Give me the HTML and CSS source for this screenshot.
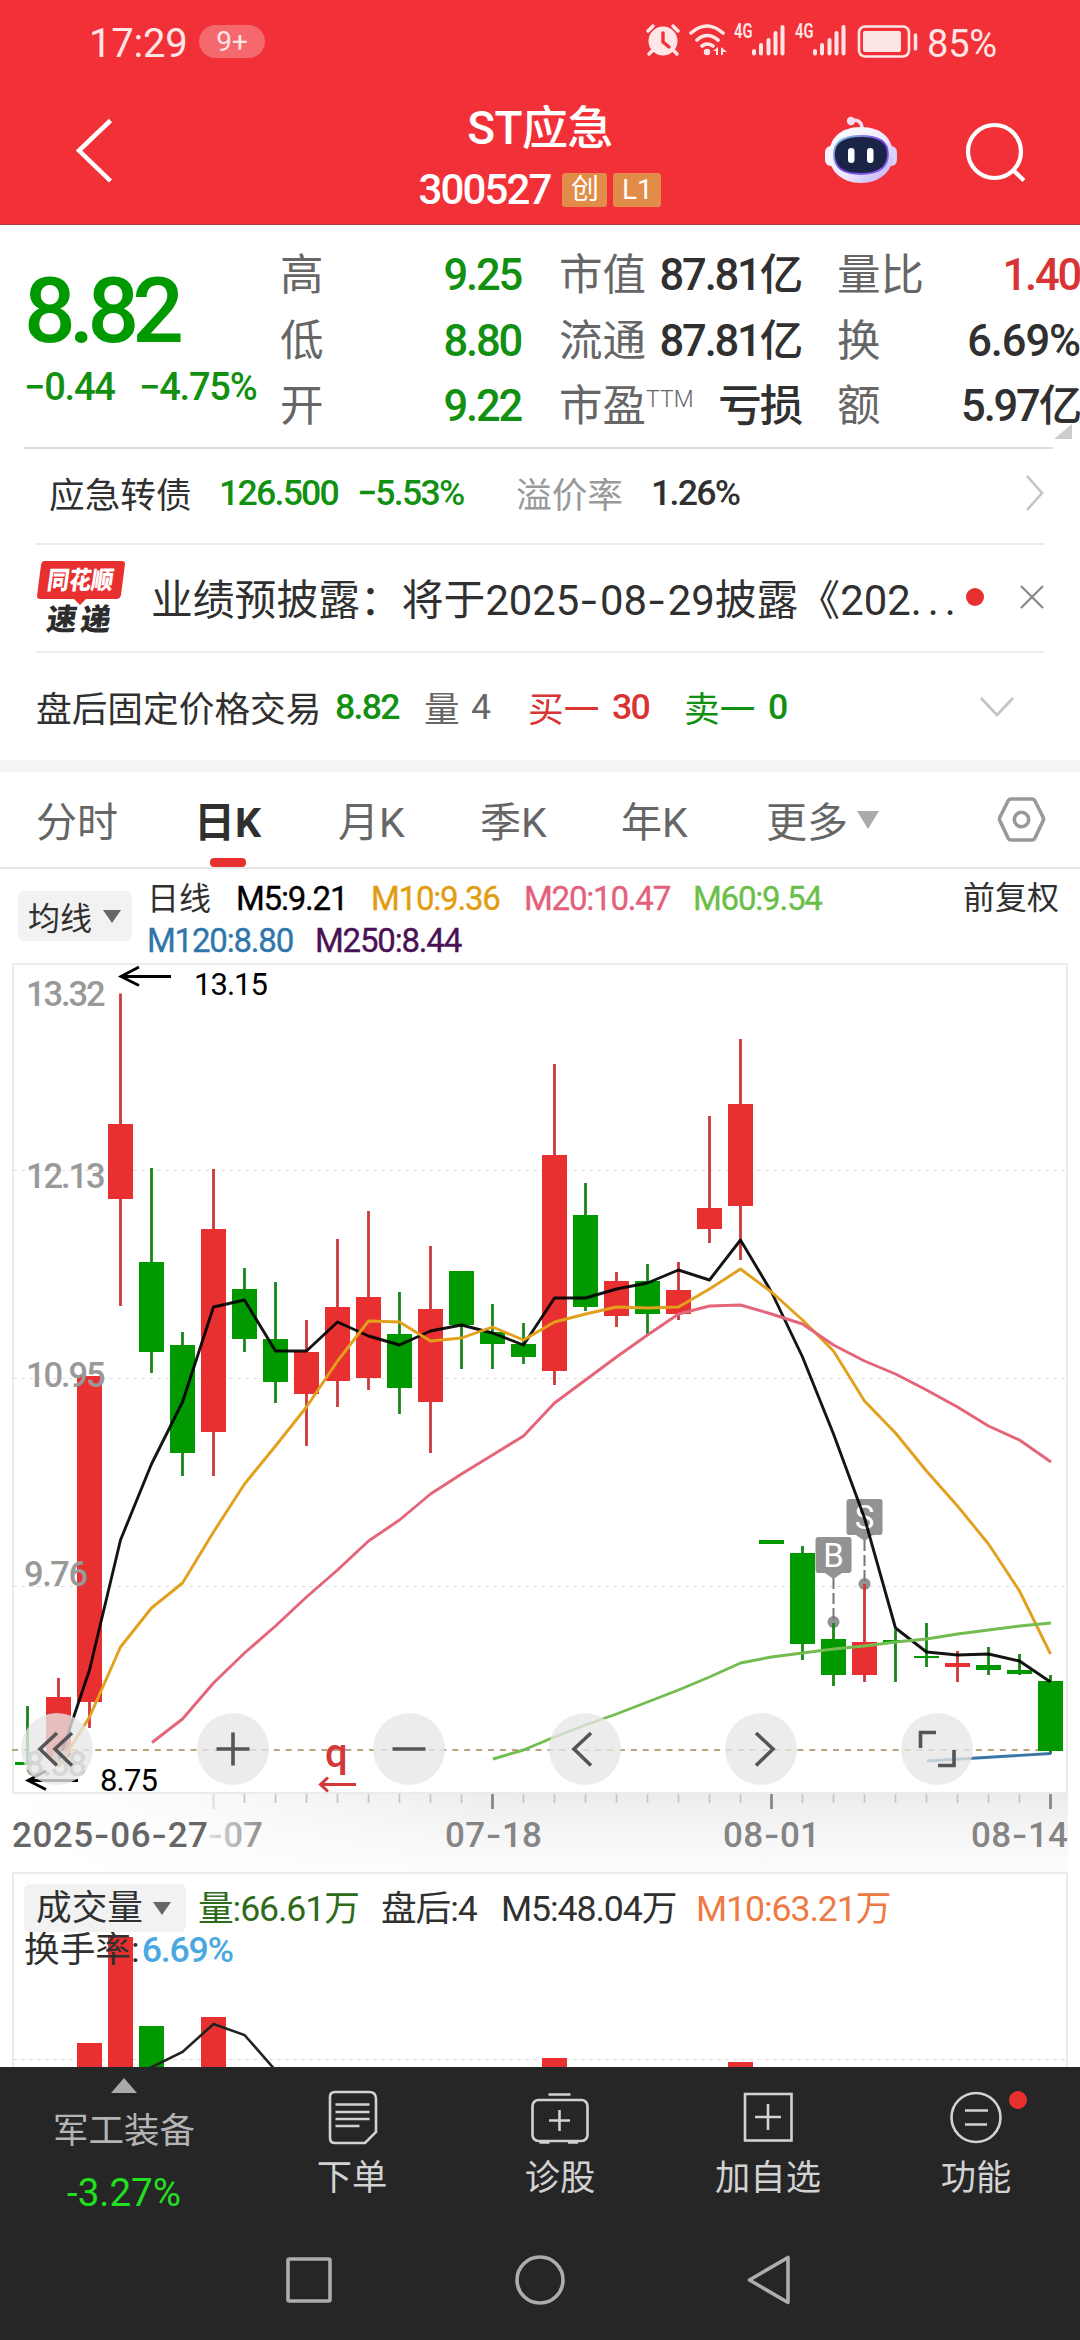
FILE: index.html
```html
<!DOCTYPE html>
<html lang="zh-CN">
<head>
<meta charset="utf-8">
<title>ST应急 300527</title>
<link rel="stylesheet" href="styles.css">
</head>
<body>
<header class="top">
  <div class="status">
    <div class="clock">17:29</div>
    <div class="badge">9+</div>
    <svg class="sys" viewBox="640 18 286 46" width="286" height="46" fill="#ffe6e6" stroke="#ffe6e6">
      <circle cx="663" cy="41" r="14.5" stroke="none"/>
      <path d="M648 31l5-5M678 31l-5-5M652 51l-3 3M674 51l3 3" stroke-width="3.5" stroke-linecap="round" fill="none"/>
      <path d="M663 33v9l6 5" stroke="#f23038" stroke-width="3.4" fill="none" stroke-linecap="round"/>
      <path d="M691 33Q707 19 723 33M697 40Q707 31 718 40M702 46Q707 42 713 46" fill="none" stroke-width="3.6" stroke-linecap="round"/>
      <circle cx="707" cy="52" r="3.2" stroke="none"/>
      <path d="M713 51l5-4v8h-2v-4zM721 47l6 5-4 0v3h-2z" stroke="none"/>
      <g stroke="none" font-size="20.500" font-weight="600">
        <text x="734" y="38" textLength="18.500" lengthAdjust="spacingAndGlyphs">4G</text>
        <text x="795" y="38" textLength="18.500" lengthAdjust="spacingAndGlyphs">4G</text>
      </g>
      <path d="M754 51v2.500M761 45v8.500M768.500 40v13.500M775.500 33v20.500M782.500 27v26.500M815 51v2.500M822 45v8.500M829.500 40v13.500M836.500 33v20.500M843.500 27v26.500" fill="none" stroke-width="4" stroke-linecap="round"/>
      <rect x="859" y="26.500" width="50" height="30" rx="6" fill="none" stroke-width="2.600"/>
      <rect x="863" y="31" width="38" height="21" rx="2" stroke="none"/>
      <path d="M915.500 35v14" stroke-width="3.500" stroke-linecap="round"/>
    </svg>
    <div class="battery">85%</div>
  </div>
  <div class="title-bar">
    <svg class="back" viewBox="70 112 50 76" width="50" height="76"><path d="M110.500 120.500L79 150.500L110.500 181" fill="none" stroke="#fff" stroke-width="4.500"/></svg>
    <div class="names">
      <div class="name">ST应急</div>
      <div class="code"><span>300527</span><b>创</b><b>L1</b></div>
    </div>
    <svg class="robot" viewBox="820 112 82 76" width="82" height="76">
      <defs>
        <linearGradient id="shell" x1="0" y1="0" x2="1" y2="1"><stop offset="0" stop-color="#fff"/><stop offset=".55" stop-color="#eeeafe"/><stop offset="1" stop-color="#b9a9f2"/></linearGradient>
        <linearGradient id="rim" x1="0" y1="0" x2="1" y2="1"><stop offset="0" stop-color="#7fd6e6"/><stop offset=".5" stop-color="#7a3fe0"/><stop offset="1" stop-color="#8a6af0"/></linearGradient>
      </defs>
      <path d="M850 121q12-3 12 8" fill="none" stroke="#f3dcec" stroke-width="3.500"/><circle cx="851" cy="121" r="4.200" fill="#f3dcec"/>
      <rect x="825" y="146" width="12" height="20" rx="6" fill="#f3f0ff"/><rect x="885" y="146" width="12" height="20" rx="6" fill="#d8cffa"/>
      <path d="M861 127c21 0 32 12 32 28s-13 28-32 28-32-12-32-28 11-28 32-28z" fill="url(#shell)"/>
      <path d="M861 136c20 0 27 7 27 18 0 13-8 20-27 20s-27-7-27-20c0-11 7-18 27-18z" fill="#1b2446" stroke="url(#rim)" stroke-width="1.800"/>
      <rect x="848" y="148" width="6.500" height="15" rx="3.200" fill="#fff"/><rect x="867" y="148" width="6.500" height="15" rx="3.200" fill="#fff"/>
    </svg>
    <svg class="search" viewBox="960 112 70 76" width="70" height="76"><g fill="none" stroke="#fff" stroke-width="4.200"><circle cx="994.500" cy="151.500" r="26.500"/><path d="M1013.500 170.500L1024 180.500"/></g></svg>
  </div>
</header>

<section class="quote">
  <div class="price">
    <div class="last">8.82</div>
    <div class="change"><span>−0.44</span><span>−4.75%</span></div>
  </div>
  <dl class="facts f1"><dt>高</dt><dd class="g">9.25</dd><dt>低</dt><dd class="g">8.80</dd><dt>开</dt><dd class="g">9.22</dd></dl>
  <dl class="facts f2"><dt>市值</dt><dd>87.81亿</dd><dt>流通</dt><dd>87.81亿</dd><dt>市盈<sup>TTM</sup></dt><dd>亏损</dd></dl>
  <dl class="facts f3"><dt>量比</dt><dd class="r">1.40</dd><dt>换</dt><dd class="pct">6.69%</dd><dt>额</dt><dd>5.97亿</dd></dl>
  <i class="corner"></i>
</section>

<section class="row bond">
  <span>应急转债</span><span class="g n">126.500</span><span class="g n">−5.53%</span><span class="mute">溢价率</span><span class="n">1.26%</span>
  <svg viewBox="0 0 24 40" width="24" height="40"><path d="M4 3l15 17L4 37" fill="none" stroke="#c4c4c4" stroke-width="2.600"/></svg>
</section>

<section class="row news">
  <svg viewBox="34 558 96 78" width="96" height="78">
    <path d="M44 561h78q3 0 3 3l-4 31q-1 4-4 4h-31l-6 6-6-6h-34q-3 0-3-3l4-31q1-4 3-4z" fill="#e83030"/>
    <g transform="skewX(-8)" font-weight="900">
      <text x="129" y="589.500" font-size="25" fill="#fff" textLength="66" lengthAdjust="spacingAndGlyphs">同花顺</text>
      <text x="134" y="630" font-size="30" fill="#2c2c2c" textLength="64">速递</text>
    </g>
  </svg>
  <span class="headline">业绩预披露：将于2025<i>-</i>08<i>-</i>29披露《202<em>...</em></span>
  <b class="dot"></b>
  <svg viewBox="0 0 24 24" width="24" height="24"><path d="M1 1l22 22M23 1L1 23" stroke="#888" stroke-width="2.200"/></svg>
</section>

<section class="row after">
  <span>盘后固定价格交易</span><span class="g n">8.82</span><span class="dim">量</span><span class="dim n">4</span><span class="r">买一</span><span class="r n">30</span><span class="g">卖一</span><span class="g n">0</span>
  <svg viewBox="0 0 36 22" width="36" height="22"><path d="M2 2l16 17L34 2" fill="none" stroke="#c4c4c4" stroke-width="2.600"/></svg>
</section>

<nav class="tabs">
  <span>分时</span><span class="on">日K</span><span>月K</span><span>季K</span><span>年K</span><span>更多</span><i class="caret"></i>
  <svg viewBox="994 793 54 54" width="54" height="54" fill="none" stroke="#999" stroke-width="3.600"><path d="M1010 799h21q2 0 3 2l8 16q1 2 0 4l-8 17q-1 2-3 2h-21q-2 0-3-2l-8-17q-1-2 0-4l8-16q1-2 3-2z"/><circle cx="1020.500" cy="819.500" r="7.200"/></svg>
</nav>

<section class="averages">
  <div class="pick">均线<i></i></div>
  <div class="lines">
    <div class="l1"><span>日线</span><span class="m5">M5:9.21</span><span class="m10">M10:9.36</span><span class="m20">M20:10.47</span><span class="m60">M60:9.54</span></div>
    <div class="l2"><span class="m120">M120:8.80</span><span class="m250">M250:8.44</span></div>
  </div>
  <div class="adjust">前复权</div>
</section>

<svg class="kline" viewBox="0 962 1080 910" width="1080" height="910">
  <defs>
    <linearGradient id="axis" x1="0" y1="0" x2="0" y2="1"><stop offset="0" stop-color="#ececec"/><stop offset=".5" stop-color="#f6f6f6"/><stop offset="1" stop-color="#fcfcfc"/></linearGradient>
    <linearGradient id="fade" x1="0" y1="0" x2="1" y2="0"><stop offset="0" stop-color="#fff"/><stop offset=".3" stop-color="#fff" stop-opacity=".8"/><stop offset="1" stop-color="#fff" stop-opacity="0"/></linearGradient>
    <linearGradient id="dim" x1="0" y1="0" x2="1" y2="0"><stop offset="0" stop-color="#e4e4e4"/><stop offset="1" stop-color="#8c8c8c"/></linearGradient>
  </defs>
  <rect x="12" y="1794" width="1056" height="78" fill="url(#axis)"/>
  <rect x="11" y="1794" width="500" height="78" fill="url(#fade)"/>
  <rect x="13" y="964" width="1054" height="829" fill="#fff" stroke="#ebebeb" stroke-width="2"/>
  <path d="M13 1170.500H1066M13 1378.500H1066M13 1586.500H1066" stroke="#dfdfdf" stroke-width="1.200" stroke-dasharray="4 4"/>
  <path d="M12 1750H1038" stroke="#b8a47c" stroke-width="2" stroke-dasharray="6 5.900"/>

  <g fill="#929292">
    <circle cx="833.500" cy="1622" r="6"/><circle cx="864.500" cy="1584" r="6"/>
    <path d="M833.500 1578v44M864.500 1540v44" stroke="#777" stroke-width="2" stroke-dasharray="11 4"/>
    <rect x="815.500" y="1537" width="36" height="36" rx="3"/><path d="M825 1573h17l-8.500 6z"/>
    <rect x="846.500" y="1499" width="36" height="36" rx="3"/><path d="M856 1535h17l-8.500 6z"/>
  </g>
  <g fill="#fff" font-size="33" text-anchor="middle"><text x="833.500" y="1567">B</text><text x="864.500" y="1529">S</text></g>

  <path stroke="#1a861a" stroke-width="2.800" fill="none" d="M27.500 1706V1763M151.500 1168V1373M182.500 1332V1476M244.500 1268V1352M275.500 1282V1403M399.500 1292V1414M461.500 1271V1369M492.500 1304V1369M523.500 1323V1364M585.500 1183V1311M647.500 1264V1334M802.500 1546V1660M833.500 1623V1686M895.500 1630V1682M926.500 1623V1667M988.500 1647V1675M1019.500 1654V1675M1050.500 1675V1754"/>
  <path stroke="#cc3a3a" stroke-width="2.800" fill="none" d="M58.500 1678V1757M89.500 1376V1728M120.500 993.500V1306M213.500 1169V1476M306.500 1320V1446M337.500 1239V1407M368.500 1211V1390M430.500 1246V1453M554.500 1064V1385M616.500 1272V1327M678.500 1262V1320M709.500 1116V1243M740.500 1039V1260M864.500 1584V1682M957.500 1651V1682"/>
  <path fill="#090" d="M15 1762h25v3h-25zM139 1262h25v90h-25zM170 1345h25v108h-25zM232 1289h25v50h-25zM263 1339h25v43h-25zM387 1334h25v54h-25zM449 1271h25v54h-25zM480 1332h25v12h-25zM511 1344h25v13h-25zM573 1215h25v92h-25zM635 1281h25v33h-25zM759 1540h25v4h-25zM790 1553h25v91h-25zM821 1639h25v36h-25zM883 1640h25v2h-25zM914 1656h25v2h-25zM976 1665h25v5h-25zM1007 1670h25v4h-25zM1038 1681h25v70h-25z"/>
  <path fill="#e83030" d="M46 1697h25v60.500h-25zM77 1376h25v326h-25zM108 1124h25v75h-25zM201 1229h25v203h-25zM294 1352h25v42h-25zM325 1307h25v74h-25zM356 1297h25v81h-25zM418 1309h25v93h-25zM542 1155h25v216h-25zM604 1281h25v35h-25zM666 1290h25v24h-25zM697 1208h25v21h-25zM728 1104h25v102h-25zM852 1642h25v33h-25zM945 1663h25v4h-25z"/>

  <g fill="none" stroke-width="2.900" stroke-linejoin="round">
    <path stroke="#000" stroke-opacity=".92" d="M58.500 1762L89.500 1670L120.500 1540L151.500 1464L182.500 1402L213.500 1307L244.500 1300L275.500 1351H306.500L337.500 1322L368.500 1336L399.500 1345L430.500 1331L461.500 1325L492.500 1333L523.500 1345L554.500 1298H585.500L616.500 1289L647.500 1283L678.500 1270L709.500 1280L740.500 1240L771.500 1292L802.500 1357L833.500 1434L864.500 1518L895.500 1628L926.500 1652L957.500 1655L988.500 1654L1019.500 1661L1050.500 1682"/>
    <path stroke="#e2a01c" d="M58.500 1767L89.500 1717L120.500 1647L151.500 1608L182.500 1583L213.500 1532L244.500 1484L275.500 1446L306.500 1407L337.500 1361L368.500 1321L399.500 1322L430.500 1341L461.500 1338L492.500 1327L523.500 1340L554.500 1322L585.500 1314L616.500 1307L647.500 1308L678.500 1307L709.500 1289L740.500 1269L771.500 1292L802.500 1320L833.500 1351L864.500 1401L895.500 1433L926.500 1471L957.500 1506L988.500 1544L1019.500 1591L1050.500 1654"/>
    <path stroke="#e4647a" d="M152 1742.500L182.500 1719L213.500 1683L244.500 1653L275.500 1626L306.500 1597L337.500 1570L368.500 1541L399.500 1520L430.500 1494L461.500 1474L492.500 1455L523.500 1436L554.500 1403L585.500 1380L616.500 1357L647.500 1335L678.500 1314L709.500 1306L740.500 1305L771.500 1314L802.500 1324L833.500 1345L864.500 1361L895.500 1374L926.500 1390L957.500 1407L988.500 1426L1019.500 1440L1051 1462"/>
    <path stroke="#72bc50" d="M493 1759L523.500 1750L554.500 1737L585.500 1725L616.500 1714L647.500 1702L678.500 1690L709.500 1677L740.500 1663L771.500 1657L802.500 1653L833.500 1649L864.500 1646L895.500 1642L926.500 1639L957.500 1634L988.500 1630L1019.500 1626L1051 1623"/>
    <path stroke="#3a76a6" d="M927 1761L1051 1753.500"/>
  </g>

  <g fill="#999" font-size="34.500" font-weight="500">
    <text x="26" y="1006" textLength="79.500">13.32</text><text x="26" y="1187.500" textLength="79.500">12.13</text><text x="26" y="1387" textLength="79.500">10.95</text><text x="24" y="1586" textLength="64">9.76</text><text x="25" y="1776" textLength="62">8.58</text>
  </g>
  <g fill="none" stroke="#000" stroke-width="2.800"><path d="M171 976.500H121M139 967L121 976.500L139 985.500M78 1780.500H28M46 1771L28 1780.500L46 1789.500"/></g>
  <g font-size="31"><text x="194" y="995" textLength="74">13.15</text><text x="100" y="1791" textLength="58">8.75</text></g>
  <text x="325" y="1766.500" font-size="40" font-weight="500" fill="#d23838">q</text>
  <path d="M356 1784.500H321M328 1777.500L320.500 1784.500L328 1791.500" fill="none" stroke="#d23838" stroke-width="3"/>

  <g fill="#e7e7e7" fill-opacity=".78"><circle cx="57" cy="1749" r="36"/><circle cx="233" cy="1749" r="36"/><circle cx="409" cy="1749" r="36"/><circle cx="585" cy="1749" r="36"/><circle cx="761" cy="1749" r="36"/><circle cx="937" cy="1749" r="36"/></g>
  <g fill="none" stroke="#555" stroke-width="3.600"><path d="M57 1733L40 1749L57 1765.500M72 1733L55 1749L72 1765.500M216.500 1749h33M233 1732.500v33M392.500 1749h33M591 1733L574 1749L591 1765.500M756 1733L773 1749L756 1765.500M920.500 1748V1732.500H936M938 1765.500H954V1750"/></g>

  <g fill="none"><path stroke="#c4c4c4" stroke-width="1.600" d="M244.500 1794v9M275.500 1794v9M306.500 1794v9M337.500 1794v9M368.500 1794v9M399.500 1794v9M430.500 1794v9M461.500 1794v9M523.500 1794v9M554.500 1794v9M585.500 1794v9M616.500 1794v9M647.500 1794v9M678.500 1794v9M709.500 1794v9M740.500 1794v9M802.500 1794v9M833.500 1794v9M864.500 1794v9M895.500 1794v9M926.500 1794v9M957.500 1794v9M988.500 1794v9M1019.500 1794v9"/>
  <path stroke="#888" stroke-width="2.800" d="M492.500 1794v15M771.500 1794v15M1050.500 1794v15"/><path stroke="#e4e4e4" stroke-width="2.800" d="M213.500 1794v15"/></g>
  <g font-size="35" font-weight="500" fill="#858585">
    <text x="12" y="1847" fill="#666" textLength="196">2025<tspan class="hy">-</tspan>06<tspan class="hy">-</tspan>27</text>
    <text x="207" y="1847" fill="url(#dim)" textLength="56"><tspan class="hy">-</tspan>07</text>
    <text x="445" y="1847" textLength="97">07<tspan class="hy">-</tspan>18</text>
    <text x="723" y="1847" textLength="97">08<tspan class="hy">-</tspan>01</text>
    <text x="971" y="1847" textLength="97">08<tspan class="hy">-</tspan>14</text>
  </g>
</svg>

<section class="volume">
  <svg viewBox="0 1872 1080 195" width="1080" height="195">
    <path d="M13 2067V1873H1067V2067" fill="#fff" stroke="#ebebeb" stroke-width="2"/>
    <path d="M13 2059.500H1066" stroke="#dcdcdc" stroke-width="1.200" stroke-dasharray="4 4"/>
    <path fill="#e83030" d="M77 2043h25v24h-25zM108 1937h25v130h-25zM201 2017h25v50h-25zM542 2058h25v9h-25zM728 2062h25v5h-25z"/>
    <path fill="#090" d="M139 2026h25v41h-25z"/>
    <path d="M150 2068L182.500 2052L213.500 2024L244.500 2035L273.500 2068" fill="none" stroke="#222" stroke-width="2.600"/>
  </svg>
  <div class="legend">
    <div class="v1"><div class="pick">成交量<i></i></div><span class="va">量:66.61万</span><span>盘后:4</span><span>M5:48.04万</span><span class="vm">M10:63.21万</span></div>
    <div class="v2">换手率:<span>6.69%</span></div>
  </div>
</section>

<footer class="bottom">
  <nav class="actions">
    <div class="sector"><i></i><span>军工装备</span><b>-3.27%</b></div>
    <div class="act"><svg viewBox="322 2086 60 62" width="60" height="62"><path d="M335 2092h34q7 0 7 7v33l-11 11h-30q-5 0-5-5v-41q0-5 5-5z"/><path d="M335.500 2104.500h34M335.500 2112h34M335.500 2119h34M335.500 2126h24"/></svg><span>下单</span></div>
    <div class="act"><svg viewBox="530 2086 60 62" width="60" height="62"><rect x="532.500" y="2100" width="55" height="41" rx="6"/><path d="M548.500 2094.500h22M559.500 2110v21M549 2120.500h21M539.500 2142.500h10M568 2142.500h10"/></svg><span>诊股</span></div>
    <div class="act"><svg viewBox="737 2086 60 62" width="60" height="62"><rect x="744" y="2094" width="46.500" height="46.500"/><path d="M767 2104v26M754 2117h26"/></svg><span>加自选</span></div>
    <div class="act"><svg viewBox="945 2086 60 62" width="60" height="62"><circle cx="975" cy="2117.500" r="24.500"/><path d="M964 2110.500h23M964 2124.500h22"/></svg><span>功能</span><b class="dot"></b></div>
  </nav>
  <svg class="keys" viewBox="0 2220 1080 120" width="1080" height="120" fill="none" stroke="#adadad" stroke-width="3.600" stroke-linejoin="round"><rect x="288" y="2259" width="42" height="42" rx="1.500"/><circle cx="540" cy="2280" r="23"/><path d="M749.500 2280L788 2257.500V2302.500z"/></svg>
</footer>
</body>
</html>
```
FILE: styles.css
```css
* { box-sizing: border-box; }
body {
  margin: 0;
  width: 1080px;
  height: 2340px;
  overflow: hidden;
  background: #fff;
  color: #303030;
  font-family: Roboto, "Noto Sans CJK SC", sans-serif;
  white-space: nowrap;
}
svg { display: block; flex: none; }
i, em { font-style: normal; }
.g { color: #119011; }
.r { color: #d83434; }
.n { font-weight: 500; letter-spacing: -0.05em; }

.top { height: 225px; background: #f23038; color: #fff; border-bottom: 1px solid #b03b48; }
.status { display: flex; height: 86px; padding-left: 89px; color: #ffe6e6; }
.clock { width: 110px; font-size: 40px; line-height: 87px; letter-spacing: -0.2px; }
.badge { width: 66px; height: 33px; margin-top: 25px; border-radius: 17px; background: #f5686e; font-size: 28px; line-height: 34px; text-align: center; }
.sys { margin: 18px 0 0 375px; }
.battery { margin-left: 1px; font-size: 38px; line-height: 88px; letter-spacing: -0.2px; }

.title-bar { display: flex; height: 138px; padding-left: 70px; }
.back { margin-top: 26px; }
.names { width: 600px; margin-left: 120px; text-align: center; }
.name { height: 84px; font-size: 46px; font-weight: 500; line-height: 84px; letter-spacing: -0.6px; }
.code { display: flex; justify-content: center; align-items: center; height: 40px; font-size: 42px; font-weight: 500; line-height: 40px; letter-spacing: -1.9px; }
.code span { margin-right: 12px; }
.code b { width: 45px; height: 34px; margin-right: 6px; border-radius: 3px; background: #e28c4a; font-size: 28px; font-weight: 400; line-height: 34px; letter-spacing: 0; }
.code b:last-child { width: 48px; margin-right: 0; }
.robot { margin: 26px 0 0 -20px; }
.search { margin: 26px 0 0 58px; }

.quote { position: relative; display: flex; height: 222px; }
.price { width: 280px; padding: 39px 0 0 24px; color: #090; font-weight: 500; }
.last { height: 94px; font-size: 91px; line-height: 94px; letter-spacing: -6.8px; }
.change { display: grid; grid-template-columns: 115px auto; margin-top: 11px; color: #119011; font-size: 38px; line-height: 36px; letter-spacing: -1.2px; }
.facts { display: grid; grid-template-columns: 80px 1fr; grid-auto-rows: 65.5px; align-items: center; margin: 18px 0 0; height: 197px; font-size: 43.5px; line-height: 65px; }
.facts dt { color: #666; }
.facts dd { margin: 0; font-weight: 500; letter-spacing: -0.05em; text-align: right; }
.facts .pct { letter-spacing: -0.025em; }
.facts sup { position: relative; top: -14px; font-size: 23px; line-height: 0; vertical-align: baseline; font-weight: 300; }
.f1 { width: 241px; }
.f2 { width: 242px; margin-left: 38px; }
.f3 { width: 243px; margin-left: 36px; }
.corner { position: absolute; right: 8px; bottom: 8px; border: solid transparent; border-width: 15px 0 0 18px; border-bottom: 15px solid #ccc; border-top: 0; }

.row { position: relative; display: grid; align-items: center; font-size: 35.7px; }
.row::before { content: ""; position: absolute; top: 0; left: 36px; right: 36px; height: 2px; background: #ececec; }
.bond { height: 96px; padding: 0 0 5px 49px; grid-template-columns: 170px 138px 159px 135px 372px 24px; }
.bond::before { left: 24px; right: 27px; background: #dedede; }
.mute { color: #999; }
.dim { color: #666; }
.news { height: 108px; padding-left: 34px; grid-template-columns: 117px 815px 54px 24px; }
.headline { font-size: 41.8px; }
.headline i, .hy { font-family: Inter, sans-serif; }
.headline i { letter-spacing: 1.5px; }
.headline em { letter-spacing: 6px; }
.dot { width: 18px; height: 18px; border-radius: 50%; background: #e83030; }
.after { height: 109px; padding: 2px 0 0 36px; grid-template-columns: 299px 89px 47px 57px 84px 72px 84px 211px 36px; }
.after .dim.n { font-weight: 400; }

.tabs { position: relative; display: grid; align-items: center; height: 109px; padding: 0 0 0 36px; border-top: 12px solid #f4f4f4; border-bottom: 2px solid #e6e6e6; grid-template-columns: 160px 142px 142px 141px 145px 91px 138px 54px; color: #666; font-size: 41px; }
.on { position: relative; left: -2px; color: #303030; font-weight: 700; }
.tabs span { padding-bottom: 2px; }
.on::after { content: ""; position: absolute; left: 16px; bottom: -16px; width: 36px; height: 9px; border-radius: 4px; background: #e83030; }
.caret { width: 0; border: solid transparent; border-width: 18px 11px 0; border-top-color: #aaa; }

.averages { display: flex; height: 93px; padding-left: 18px; font-size: 32px; }
.pick { display: flex; flex: none; align-items: center; background: #f2f2f2; border-radius: 6px; }
.pick i { border: solid transparent; border-width: 13px 9px 0; border-top-color: #666; }
.averages .pick { width: 114px; height: 50px; margin-top: 22px; padding-left: 10px; gap: 11px; }
.lines { flex: none; width: 832px; padding-left: 15px; line-height: 42px; }
.l1, .l2 { display: grid; height: 42px; }
.l1 { margin-top: 9px; grid-template-columns: 89px 135px 153px 169px auto; }
.l2 { grid-template-columns: 168px auto; }
.lines [class^="m"] { font-size: 33px; font-weight: 400; letter-spacing: -1.2px; -webkit-text-stroke: .35px currentColor; }
.adjust { margin: 8px 0 0 -1px; line-height: 42px; }
.m5 { color: #000; } .m10 { color: #e29c0f; } .m20 { color: #e4607a; }
.m60 { color: #6bbf48; } .m120 { color: #2f76aa; } .m250 { color: #4a1254; }

.volume { position: relative; height: 195px; }
.legend { position: absolute; left: 24px; top: 12px; font-size: 35.7px; }
.v1 { display: grid; grid-template-columns: 174px 183px 120px 195px auto; height: 48px; line-height: 50px; }
.v1 > span { letter-spacing: -1.1px; }
.v1 .pick { width: 162px; height: 48px; padding-left: 12px; gap: 10px; }
.va { color: #2f6a1a; }
.vm { color: #ee7a44; }
.v2 { height: 36px; line-height: 36px; }
.v2 span { margin-left: 2px; color: #4aa8e0; font-weight: 500; letter-spacing: -1.2px; }

.bottom { height: 273px; background: #262626; color: #d2d2d2; font-size: 35.3px; }
.actions { display: grid; grid-template-columns: 248px repeat(4, 208px); height: 153px; }
.sector { display: flex; flex-direction: column; align-items: center; color: #b4b4b4; }
.sector i { margin-top: 11px; border: solid transparent; border-width: 0 13px 15px; border-bottom-color: #aaa; }
.sector span { margin-top: 17px; font-size: 35.5px; line-height: 42px; }
.sector b { margin-top: 20px; color: #20e020; font-size: 38.5px; font-weight: 400; line-height: 42px; letter-spacing: 0; }
.act { position: relative; display: flex; flex-direction: column; align-items: center; padding-top: 19px; }
.act svg { fill: none; stroke: #d2d2d2; stroke-width: 2.6px; }
.act span { margin-top: 9px; line-height: 42px; }
.act .dot { position: absolute; left: 137px; top: 24px; }
```
